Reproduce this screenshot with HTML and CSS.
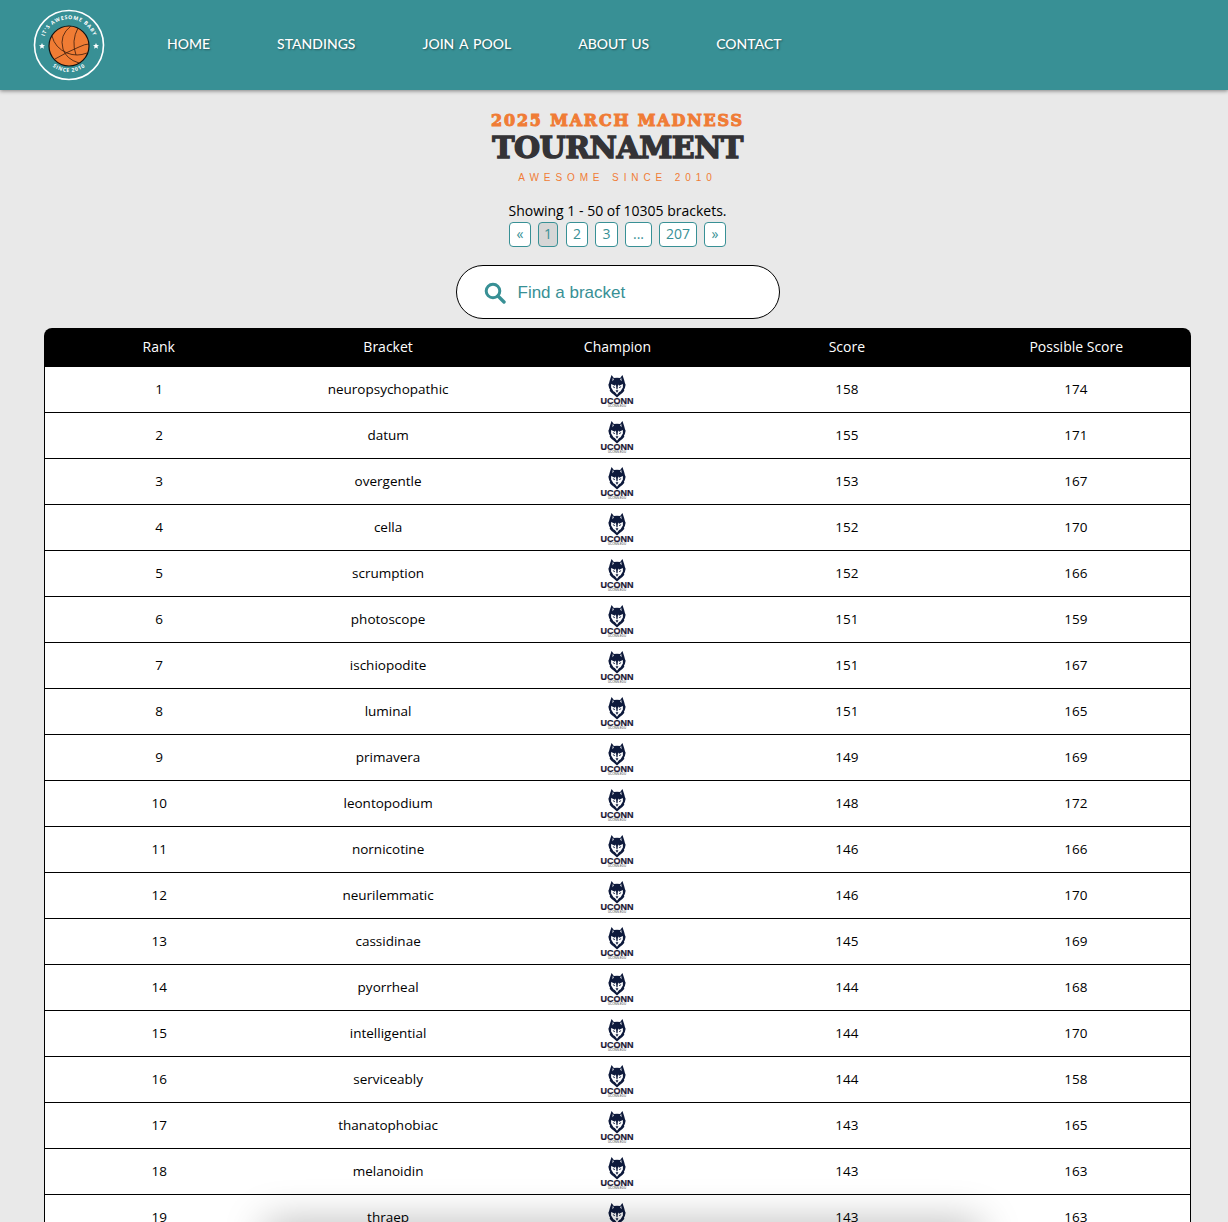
FILE: index.html
```html
<!DOCTYPE html>
<html lang="en">
<head>
    <meta charset="UTF-8">
    <title>2025 March Madness Tournament</title>
    <link rel="stylesheet" href="styles.css">
</head>
<body>
    <svg class="defs" width="0" height="0">
        <symbol id="uconn" viewBox="0 0 36 36">
            <g transform="translate(-0.9 2.5) scale(1.05 .9)">
                <path fill="#0e1a3c" d="M12.800 .6 L15 4 Q18 3.200 21 4 L23.200 .6 L24.800 6 Q25.400 9 26.200 11.500 Q25.800 15 24.600 17 L25 18 Q23 21 21.500 22 L18 25.500 L14.500 22 Q13 21 11 18 L11.400 17 Q10.200 15 9.800 11.500 Q10.600 9 11.200 6 Z"/>
                <path fill="#fff" d="M12.400 10.500 L16 12.600 L17 11 L17.500 16.500 H18.500 L19 11 L20 12.600 L23.600 10.500 L23.600 14.500 L21.400 18.500 L20 19.500 L18 22.500 L16 19.500 L14.600 18.500 L12.400 14.500 Z"/>
                <path fill="#0e1a3c" d="M13.800 12.800 L16.200 14.200 L15.200 15.400 Z M22.200 12.800 L19.800 14.200 L20.800 15.400 Z M16.600 17.600 H19.400 L18 20.400 Z"/>
                <path fill="#fff" d="M14 3.500 L15 5.500 L13.600 7.500 Z M22 3.500 L21 5.500 L22.400 7.500 Z"/>
            </g>
            <text class="logo-word" x="18" y="31.500" text-anchor="middle">UCONN</text>
            <text class="logo-sub" x="18" y="35.400" text-anchor="middle">UCONN.EDU</text>
        </symbol>
    </svg>

    <header class="topbar">
        <svg class="logo" viewBox="0 0 72 72" width="72" height="72">
            <defs>
                <path id="arc-top" d="M10 36 A26 26 0 0 1 62 36"/>
                <path id="arc-bottom" d="M9 36 A27 27 0 0 0 63 36"/>
            </defs>
            <circle cx="36" cy="36" r="34.500" fill="none" stroke="#fff" stroke-width="1.600"/>
            <text class="logo-ring"><textPath href="#arc-top" startOffset="50%" text-anchor="middle">IT'S AWESOME BABY</textPath></text>
            <text class="logo-ring"><textPath href="#arc-bottom" startOffset="50%" text-anchor="middle">SINCE 2010</textPath></text>
            <path fill="#fff" d="M9 34 l.9 2 2.100.2-1.600 1.400.5 2.100-1.900-1.100-1.900 1.100.5-2.100-1.600-1.400 2.100-.2z M63 34 l.9 2 2.100.2-1.600 1.400.5 2.100-1.900-1.100-1.900 1.100.5-2.100-1.600-1.400 2.100-.2z"/>
            <circle cx="36" cy="37" r="20" fill="#f07c34" stroke="#111" stroke-width="1.200"/>
            <path fill="none" stroke="#3a1c0c" stroke-width=".8" d="M38 17 Q26 26 30 40 Q33 50 46 54 M19 27 Q22 39 34 44 Q44 48 54 44 M22 50 Q34 43 46 38 Q52 35 56 35 M45 19 Q38 32 43 46"/>
        </svg>
        <nav class="main-nav">
            <a href="#">HOME</a>
            <a href="#">STANDINGS</a>
            <a href="#">JOIN A POOL</a>
            <a href="#">ABOUT US</a>
            <a href="#">CONTACT</a>
        </nav>
    </header>

    <main class="content">
        <div class="title-block">
            <div class="title-top">2025 MARCH MADNESS</div>
            <div class="title-main">TOURNAMENT</div>
            <div class="title-sub">AWESOME SINCE 2010</div>
        </div>

        <p class="showing">Showing 1 - 50 of 10305 brackets.</p>
        <div class="pager">
            <a href="#">«</a>
            <a href="#" class="current">1</a>
            <a href="#">2</a>
            <a href="#" class="wide">3</a>
            <a href="#" class="gap">...</a>
            <a href="#" class="last">207</a>
            <a href="#">»</a>
        </div>

        <div class="search">
            <svg viewBox="0 0 22 22" width="22" height="22">
                <circle cx="9" cy="9" r="6.800" fill="none" stroke="#389095" stroke-width="3"/>
                <path d="M14 14 L20 20" stroke="#389095" stroke-width="3.400" stroke-linecap="round"/>
            </svg>
            <span>Find a bracket</span>
        </div>

        <table class="standings">
            <thead>
                <tr><th>Rank</th><th>Bracket</th><th>Champion</th><th>Score</th><th>Possible Score</th></tr>
            </thead>
            <tbody>
                <tr><td>1</td><td>neuropsychopathic</td><td><svg class="champ"><use href="#uconn"/></svg></td><td>158</td><td>174</td></tr>
                <tr><td>2</td><td>datum</td><td><svg class="champ"><use href="#uconn"/></svg></td><td>155</td><td>171</td></tr>
                <tr><td>3</td><td>overgentle</td><td><svg class="champ"><use href="#uconn"/></svg></td><td>153</td><td>167</td></tr>
                <tr><td>4</td><td>cella</td><td><svg class="champ"><use href="#uconn"/></svg></td><td>152</td><td>170</td></tr>
                <tr><td>5</td><td>scrumption</td><td><svg class="champ"><use href="#uconn"/></svg></td><td>152</td><td>166</td></tr>
                <tr><td>6</td><td>photoscope</td><td><svg class="champ"><use href="#uconn"/></svg></td><td>151</td><td>159</td></tr>
                <tr><td>7</td><td>ischiopodite</td><td><svg class="champ"><use href="#uconn"/></svg></td><td>151</td><td>167</td></tr>
                <tr><td>8</td><td>luminal</td><td><svg class="champ"><use href="#uconn"/></svg></td><td>151</td><td>165</td></tr>
                <tr><td>9</td><td>primavera</td><td><svg class="champ"><use href="#uconn"/></svg></td><td>149</td><td>169</td></tr>
                <tr><td>10</td><td>leontopodium</td><td><svg class="champ"><use href="#uconn"/></svg></td><td>148</td><td>172</td></tr>
                <tr><td>11</td><td>nornicotine</td><td><svg class="champ"><use href="#uconn"/></svg></td><td>146</td><td>166</td></tr>
                <tr><td>12</td><td>neurilemmatic</td><td><svg class="champ"><use href="#uconn"/></svg></td><td>146</td><td>170</td></tr>
                <tr><td>13</td><td>cassidinae</td><td><svg class="champ"><use href="#uconn"/></svg></td><td>145</td><td>169</td></tr>
                <tr><td>14</td><td>pyorrheal</td><td><svg class="champ"><use href="#uconn"/></svg></td><td>144</td><td>168</td></tr>
                <tr><td>15</td><td>intelligential</td><td><svg class="champ"><use href="#uconn"/></svg></td><td>144</td><td>170</td></tr>
                <tr><td>16</td><td>serviceably</td><td><svg class="champ"><use href="#uconn"/></svg></td><td>144</td><td>158</td></tr>
                <tr><td>17</td><td>thanatophobiac</td><td><svg class="champ"><use href="#uconn"/></svg></td><td>143</td><td>165</td></tr>
                <tr><td>18</td><td>melanoidin</td><td><svg class="champ"><use href="#uconn"/></svg></td><td>143</td><td>163</td></tr>
                <tr><td>19</td><td>thraep</td><td><svg class="champ"><use href="#uconn"/></svg></td><td>143</td><td>163</td></tr>
            </tbody>
        </table>
    </main>

    <div class="bottom-shadow"></div>
</body>
</html>
```

FILE: styles.css
```css
html, body {
    height: 100%;
    overflow: hidden;
}
body {
    margin: 0;
    background-color: #e9e9e9;
    color: #000;
    font-family: "Open Sans", "Liberation Sans", sans-serif;
}
.defs {
    position: absolute;
}
.topbar {
    display: flex;
    align-items: center;
    height: 90px;
    padding-left: 33px;
    background-color: #389095;
    box-shadow: 0 1px 4px rgba(0, 0, 0, 0.45);
}
.logo {
    flex: none;
}
.logo-ring {
    fill: #fff;
    font-family: "Open Sans", sans-serif;
    font-size: 5.200px;
    font-weight: 700;
    letter-spacing: 0.7px;
}
.main-nav {
    display: flex;
    gap: 67px;
    margin: -4px 0 0 62px;
}
.main-nav a {
    color: #fff;
    font-family: "Lato", sans-serif;
    font-size: 14px;
    font-weight: 500;
    word-spacing: 1.500px;
    text-decoration: none;
    text-shadow: 1px 1px 2px rgba(0, 0, 0, 0.4);
}
.content {
    display: flex;
    flex-direction: column;
    align-items: center;
    padding: 0 37px 0 44px;
}
.title-block {
    margin-top: 22px;
    text-align: center;
    font-family: "DejaVu Serif", serif;
}
.title-top {
    color: #f07c36;
    font-size: 16px;
    line-height: 18px;
    font-weight: 700;
    letter-spacing: 1.800px;
    -webkit-text-stroke: 1px #f07c36;
}
.title-main {
    margin-top: 1px;
    color: #343336;
    font-size: 30px;
    line-height: 34px;
    font-weight: 700;
    letter-spacing: -0.550px;
    -webkit-text-stroke: 1.400px #343336;
}
.title-sub {
    margin-top: 6px;
    color: #f07c36;
    font-family: "Liberation Sans", sans-serif;
    font-size: 10px;
    line-height: 14px;
    letter-spacing: 4.900px;
}
.showing {
    margin: 17px 0 0;
    font-size: 14px;
    line-height: 18px;
}
.pager {
    display: flex;
    gap: 7px;
    margin-top: 2px;
}
.pager a {
    box-sizing: border-box;
    min-width: 22px;
    height: 25px;
    padding: 0 4px;
    border: 1px solid #389095;
    border-radius: 4px;
    background-color: #fff;
    color: #389095;
    font-size: 14px;
    line-height: 22px;
    text-align: center;
    text-decoration: none;
}
.pager .current {
    min-width: 20px;
    margin-right: 1px;
    background-color: #d6d6d6;
}
.pager .wide {
    min-width: 23px;
}
.pager .gap {
    min-width: 27px;
}
.pager .last {
    min-width: 38px;
}
.search {
    box-sizing: border-box;
    display: flex;
    align-items: center;
    gap: 12px;
    width: 324px;
    height: 54px;
    margin-top: 18px;
    padding: 1px 0 0 27px;
    border: 1px solid #000;
    border-radius: 27px;
    background-color: #fff;
    color: #389095;
    font-family: "Liberation Sans", sans-serif;
    font-size: 17px;
}
.standings {
    width: 1147px;
    margin-top: 9px;
    border-collapse: separate;
    border-spacing: 0;
    table-layout: fixed;
    background-color: #fff;
    border-radius: 8px 8px 0 0;
    font-size: 13.500px;
    line-height: 16px;
}
.standings th {
    height: 39px;
    padding: 0 0 2px;
    box-sizing: border-box;
    background-color: #000;
    color: #fff;
    font-size: 14px;
    font-weight: 500;
}
.standings th:first-child {
    border-top-left-radius: 8px;
}
.standings th:last-child {
    border-top-right-radius: 8px;
}
.standings td {
    height: 44px;
    padding: 0 0 1px;
    border-bottom: 1px solid #000;
    text-align: center;
}
.standings td:first-child {
    border-left: 1px solid #000;
}
.standings td:last-child {
    border-right: 1px solid #000;
}
.champ {
    display: block;
    width: 36px;
    height: 36px;
    margin: 1px auto 0;
}
.logo-word {
    fill: #1a1533;
    font-family: "Liberation Sans", sans-serif;
    font-size: 9px;
    font-weight: 700;
    stroke: #1a1533;
    stroke-width: 0.2px;
}
.logo-sub {
    fill: #444;
    font-family: "Liberation Sans", sans-serif;
    font-size: 3px;
}
.bottom-shadow {
    position: fixed;
    left: 265px;
    bottom: -40px;
    width: 715px;
    height: 40px;
    box-shadow: 0 0 40px rgba(0, 0, 0, 0.28);
}
```
